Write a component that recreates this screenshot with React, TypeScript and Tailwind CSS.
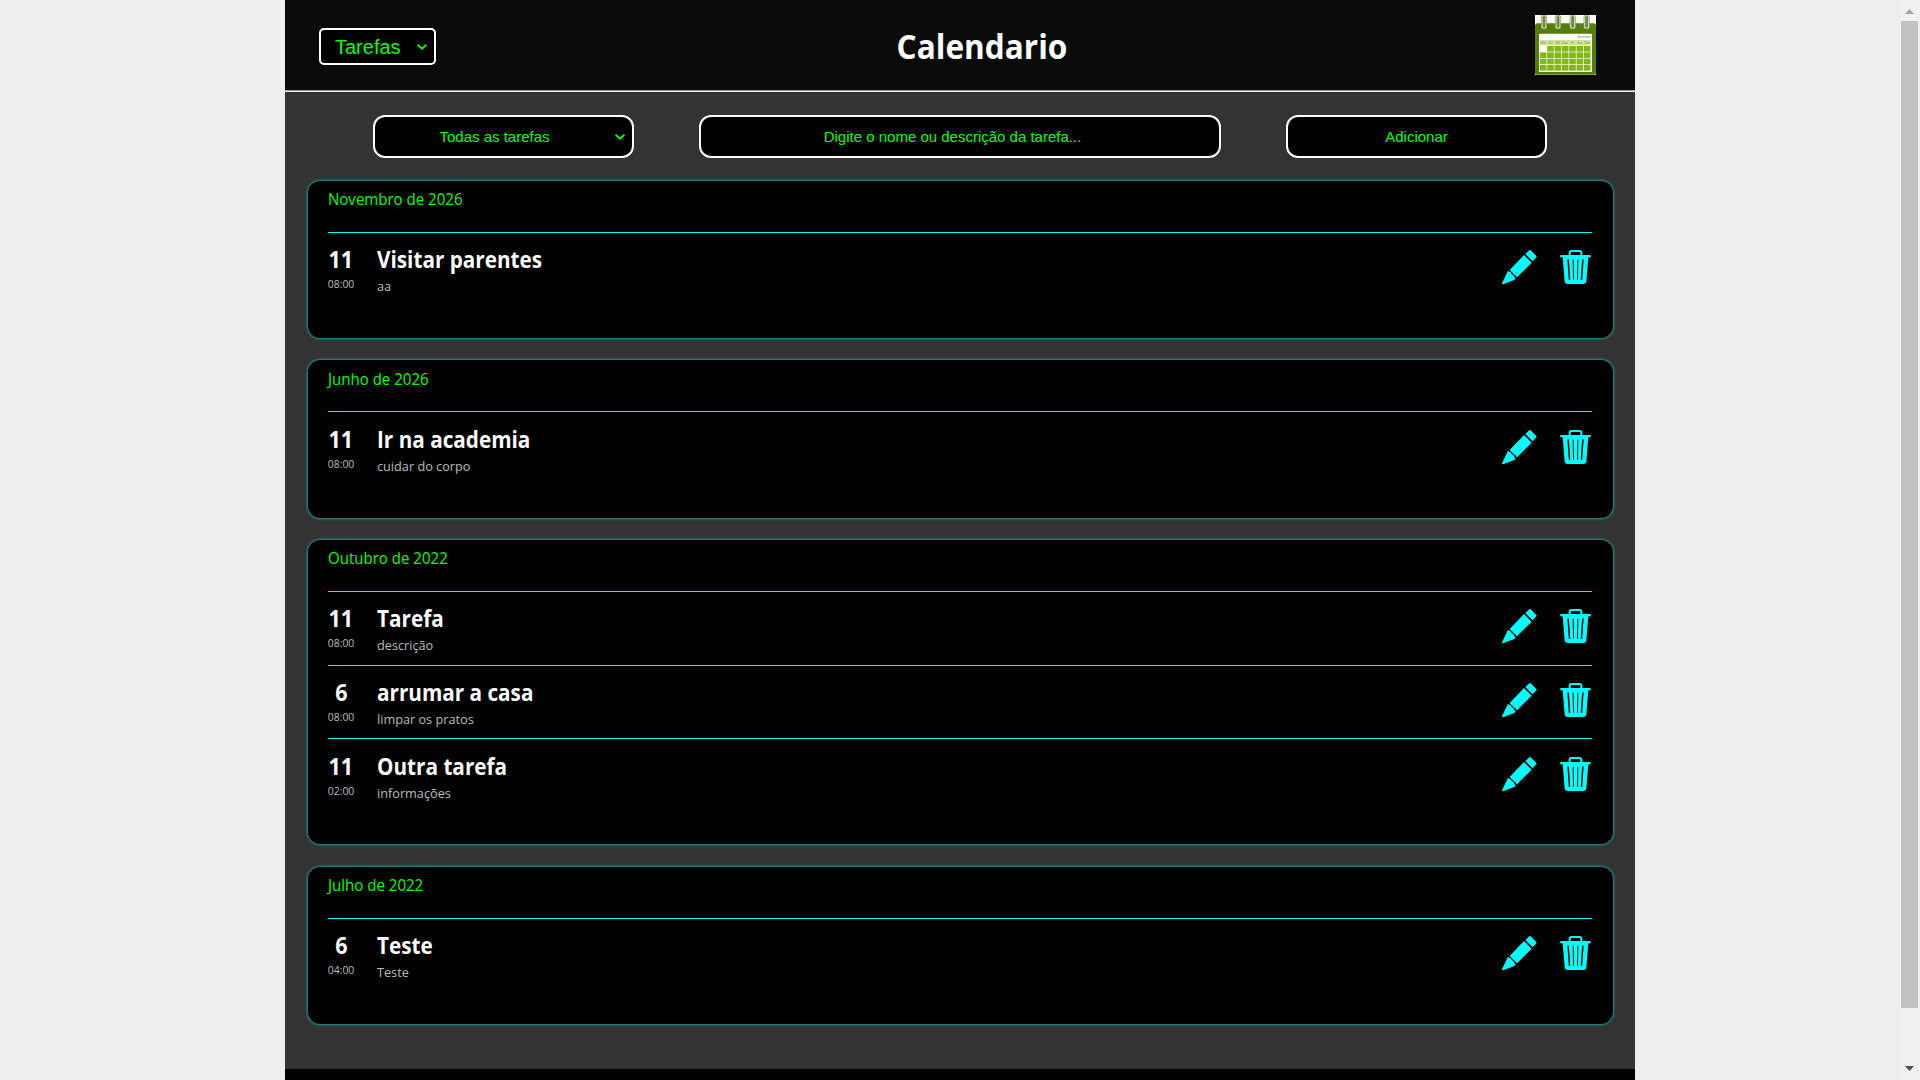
import React from "react";

type Task = { day: string; time: string; title: string; text: string };
type Group = { month: string; tasks: Task[]; box: string; label: string; rows: string[] };

const singleRow = ["h-[74px] pt-[13px]"];

const groups: Group[] = [
  {
    month: "Novembro de 2026",
    box: "h-[157px]",
    label: "mt-[7px] mb-[22px]",
    rows: singleRow,
    tasks: [{ day: "11", time: "08:00", title: "Visitar parentes", text: "aa" }],
  },
  {
    month: "Junho de 2026",
    box: "h-[158px]",
    label: "mt-[8px] mb-[21px]",
    rows: ["h-[74px] pt-[14px]"],
    tasks: [{ day: "11", time: "08:00", title: "Ir na academia", text: "cuidar do corpo" }],
  },
  {
    month: "Outubro de 2022",
    box: "h-[304px]",
    label: "mt-[7px] mb-[22px]",
    rows: ["h-[74px] pt-[13px]", "h-[73px] pt-[13px]", "h-[74px] pt-[14px]"],
    tasks: [
      { day: "11", time: "08:00", title: "Tarefa", text: "descrição" },
      { day: "6", time: "08:00", title: "arrumar a casa", text: "limpar os pratos" },
      { day: "11", time: "02:00", title: "Outra tarefa", text: "informações" },
    ],
  },
  {
    month: "Julho de 2022",
    box: "mt-px h-[157px]",
    label: "mt-[7px] mb-[22px]",
    rows: singleRow,
    tasks: [{ day: "6", time: "04:00", title: "Teste", text: "Teste" }],
  },
];

function Chevron() {
  return (
    <svg width="12" height="8" viewBox="0 0 12 8" fill="none" stroke="#00ff00" strokeWidth="1.9">
      <path d="M1.6 1.8 6 5.800 10.400 1.800" />
    </svg>
  );
}

function Pencil() {
  return (
    <svg width="36" height="36" viewBox="0 2 108 108" fill="#00ffff">
      <path d="M85 3q2-2 4 0l17 17q2 2 0 4L95 36 73 14Z" />
      <path d="M69 17 92 40 48 84q-3-2-5-6-6-3-8-8-5-3-9-8Z" />
      <path d="M21 64q3 4 8 5 2 7 9 9 1 5 6 10l-4 4L6 105q-3 0-3-3Z" />
    </svg>
  );
}

function Trash() {
  return (
    <svg width="31" height="34" viewBox="0 0 93 102" fill="none" stroke="#00ffff">
      <path d="M29 18V8q0-5 5-5h25q5 0 5 5v10" strokeWidth="6" />
      <path d="M4 18.500h85" strokeWidth="7" strokeLinecap="round" />
      <path
        d="M8 21h77l-6 73q-1 8-9 8H23q-8 0-9-8Z"
        fill="#00ffff"
        stroke="none"
      />
      <path d="M24.500 30 28.500 88M68.500 30 64.500 88" stroke="#000" strokeWidth="4.500" strokeLinecap="round" />
      <path d="M39.500 29 40.500 89M53.500 29 52.500 89" stroke="#000" strokeWidth="3" />
    </svg>
  );
}

function CalendarLogo() {
  const days = ["Mo", "Di", "Mi", "Do", "Fr", "Sa", "So"];
  return (
    <svg width="61" height="60" viewBox="0 0 183 180">
      <rect width="183" height="180" fill="#fff" />
      <path d="M0 32q0-7 7-7h169q7 0 7 7v143q0 4-5 4H5q-5 0-5-4Z" fill="#557d0c" />
      <rect x="12" y="56" width="159" height="115" rx="2" fill="#fff" />
      <rect x="15" y="75" width="153" height="16" fill="#cfe3a0" />
      <text x="168" y="70" textAnchor="end" fontSize="9" fill="#777" fontFamily="Liberation Sans, sans-serif">
        November
      </text>
      {days.map((d, c) => (
        <g key={c}>
          <text x={24 + c * 22} y="88" textAnchor="middle" fontSize="13" fill="#7b9c45" fontFamily="Liberation Sans, sans-serif">
            {d}
          </text>
          {[0, 1, 2, 3].map((r) => (
            <rect
              key={r}
              x={14.5 + c * 22}
              y={93 + r * 19}
              width="20"
              height="17"
              fill={c === 0 && r === 0 ? "#fff" : "#84b819"}
            />
          ))}
        </g>
      ))}
      {[27, 69, 113, 155].map((x) => (
        <g key={x}>
          <rect x={x - 8} y="1" width="16" height="40" rx="5" fill="#e4ecd6" stroke="#8da56a" strokeWidth="2.500" />
          <rect x={x - 4.5} y="3" width="9" height="35" rx="4" fill="#6f8a48" />
        </g>
      ))}
    </svg>
  );
}

function TaskRow({ task, size }: { task: Task; size: string }) {
  return (
    <li className={"flex border-t border-[#00ffff] " + size}>
      <div className="flex w-[26px] flex-col items-center whitespace-nowrap">
        <span className="mt-[-1px] scale-x-[0.96] text-[22.4px] leading-[30px] font-bold text-white">{task.day}</span>
        <span className="mt-[1px] scale-x-[0.945] text-[11px] leading-[15px] text-[#bbb]">{task.time}</span>
      </div>
      <div className="ml-[23px] flex flex-1 flex-col items-start">
        <h2 className="mt-[-1px] origin-left scale-x-[0.925] text-[22.4px] leading-[30px] font-bold text-white">
          {task.title}
        </h2>
        <p className="mt-[2px] origin-left scale-x-[0.955] text-[13.3px] leading-[18px] text-[#bbb]">{task.text}</p>
      </div>
      <div className="mr-[1px] flex gap-[23px] pt-[4px]">
        <button className="h-9 w-9">
          <Pencil />
        </button>
        <button className="h-[34px] w-[31px]">
          <Trash />
        </button>
      </div>
    </li>
  );
}

export default function App() {
  return (
    <div className="flex h-[1080px] w-[1920px] overflow-hidden bg-[#eee] font-['Open_Sans',sans-serif]">
      <div className="ml-[285px] flex w-[1350px] flex-col bg-black">
        <header className="flex h-[92px] shrink-0 items-start justify-between border-b border-[#eee] bg-[#0b0b0b] pr-[39px] pl-[34px] shadow-[inset_0_-1px_0_#999]">
          <button className="mt-7 flex h-[37px] w-[117px] items-center justify-between rounded-[5px] border-2 border-white bg-black pr-[6px] pl-[14px] font-['Liberation_Sans',sans-serif] text-[20px] leading-none text-[#00ff00]">
            <span>Tarefas</span>
            <Chevron />
          </button>
          <h1 className="mt-[23px] scale-x-[0.928] text-[34px] leading-[46px] font-bold text-white">Calendario</h1>
          <div className="mt-[15px] ml-[7px]">
            <CalendarLogo />
          </div>
        </header>
        <main className="h-[977px] shrink-0 bg-[#333] pt-[23px] pr-[22px] pl-[23px]">
          <div className="flex justify-between pr-[66px] pl-[65px] font-['Liberation_Sans',sans-serif] text-[15px] leading-none text-[#00ff00]">
            <button className="flex h-[43px] w-[261px] items-center rounded-[12px] border-2 border-white bg-black pr-[6px]">
              <span className="flex-1 text-center">Todas as tarefas</span>
              <Chevron />
            </button>
            <div className="flex h-[43px] w-[522px] items-center justify-center rounded-[12px] border-2 border-white bg-black pr-[15px]">
              Digite o nome ou descrição da tarefa...
            </div>
            <button className="h-[43px] w-[261px] rounded-[12px] border-2 border-white bg-black">Adicionar</button>
          </div>
          <div className="mt-[23px] flex flex-col gap-[22px]">
            {groups.map((g) => (
              <section
                key={g.month}
                className={"flex flex-col rounded-[12px] bg-black pr-[21px] pl-5 shadow-[0_0_3px_#00ffff] " + g.box}
              >
                <p
                  className={
                    "w-fit origin-left scale-x-[0.94] text-[16px] leading-[22px] text-[#00ff00] " + g.label
                  }
                >
                  {g.month}
                </p>
                <ul>
                  {g.tasks.map((t, i) => (
                    <TaskRow key={t.title} task={t} size={g.rows[i]} />
                  ))}
                </ul>
              </section>
            ))}
          </div>
        </main>
      </div>
      <div className="ml-auto flex w-[21px] flex-col items-center bg-[#f0f0f0]">
        <svg width="9" height="5" viewBox="0 0 9 5" className="mt-[9px]">
          <path d="M4.500 0 9 5H0Z" fill="#a3a3a3" />
        </svg>
        <div className="mt-[7px] h-[987px] w-[17px] bg-[#c1c1c1]" />
        <svg width="9" height="5" viewBox="0 0 9 5" className="mt-[58px]">
          <path d="M0 0h9L4.500 5Z" fill="#505050" />
        </svg>
      </div>
    </div>
  );
}
